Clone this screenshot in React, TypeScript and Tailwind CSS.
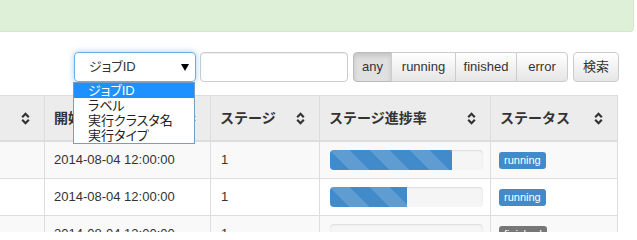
const font = "font-['Liberation_Sans','Noto_Sans_CJK_JP',sans-serif]";

type Job = {
  startedAt: string;
  stage: number;
  progress: number;
  status: "running" | "finished";
};

const jobs: Job[] = [
  { startedAt: "2014-08-04 12:00:00", stage: 1, progress: 80, status: "running" },
  { startedAt: "2014-08-04 12:00:00", stage: 1, progress: 50, status: "running" },
  { startedAt: "2014-08-04 12:00:00", stage: 1, progress: 0, status: "finished" },
];

const options = ["ジョブID", "ラベル", "実行クラスタ名", "実行タイプ"];

function SortIcon() {
  return (
    <svg width="9" height="13" viewBox="0 0 9 13" className="shrink-0">
      <path d="M1.2 5.2 L4.5 1.8 L7.8 5.2" fill="none" stroke="#333" strokeWidth="2.2" />
      <path d="M1.2 7.8 L4.5 11.2 L7.8 7.8" fill="none" stroke="#333" strokeWidth="2.2" />
    </svg>
  );
}

function HeaderCell({ label, className }: { label?: string; className: string }) {
  return (
    <div className={`flex items-center justify-between border-r border-[#dddddd] pl-[9px] pr-[14px] ${className}`}>
      <span className="whitespace-nowrap text-[14px] font-bold text-[#333]">{label}</span>
      <SortIcon />
    </div>
  );
}

function ProgressBar({ value }: { value: number }) {
  return (
    <div className="h-[20px] w-[153px] overflow-hidden rounded-[4px] bg-[#f5f5f5] shadow-[inset_0_1px_2px_rgba(0,0,0,0.1)]">
      <div
        className="h-full bg-[#428bca] bg-[linear-gradient(45deg,rgba(255,255,255,0.15)_25%,transparent_25%,transparent_50%,rgba(255,255,255,0.15)_50%,rgba(255,255,255,0.15)_75%,transparent_75%,transparent)] bg-[length:40px_40px]"
        style={{ width: `${value}%` }}
      />
    </div>
  );
}

function StatusLabel({ status }: { status: Job["status"] }) {
  const color = status === "running" ? "bg-[#428bca]" : "bg-[#777777]";
  return (
    <span className={`inline-block rounded-[3px] px-[5px] pt-[1px] pb-[2px] text-[11px] leading-[14px] text-white ${color}`}>
      {status}
    </span>
  );
}

export default function App() {
  return (
    <div className={`h-[232px] w-[637px] overflow-hidden bg-white text-[#333] ${font}`}>
      <div className="mr-[3px] h-[32px] rounded-br-[4px] border-r border-b border-[#d6e9c6] bg-[#dff0d8]" />

      <div className="mt-[20px] flex h-[30px] pl-[74px]">
        <div className="relative">
          <div className="flex h-[30px] w-[122px] items-center justify-between rounded-[4px] border border-[#66afe9] pl-[14px] pr-[6px] shadow-[0_0_6px_rgba(102,175,233,0.6)]">
            <span className="text-[13px] [font-feature-settings:'palt']">ジョブID</span>
            <svg width="8" height="7" viewBox="0 0 8 7">
              <path d="M0 0 H8 L4 7 Z" fill="#000" />
            </svg>
          </div>
          <ul className="absolute top-[30px] left-[-1px] z-10 w-[122px] border border-[#7a9cbf] bg-white py-0 text-[13px] leading-[15px] [font-feature-settings:'palt']">
            {options.map((option, i) => (
              <li
                key={option}
                className={`h-[15px] pl-[14px] ${i === 0 ? "bg-[#1e90ff] text-white" : "text-[#222]"}`}
              >
                {option}
              </li>
            ))}
          </ul>
        </div>

        <input
          className="ml-[4px] h-[30px] w-[148px] rounded-[4px] border border-[#cccccc] px-2 text-[13px] shadow-[inset_0_1px_1px_rgba(0,0,0,0.075)] outline-none"
          readOnly
        />

        <div className="ml-[5px] flex h-[30px] text-[13px]">
          <button className="w-[39px] rounded-l-[4px] border border-[#bbbbbb] bg-[#e0e0e0] shadow-[inset_0_3px_5px_rgba(0,0,0,0.125)]">
            any
          </button>
          <button className="-ml-px w-[65px] border border-[#cccccc] bg-[linear-gradient(#ffffff,#e6e6e6)]">
            running
          </button>
          <button className="-ml-px w-[62px] border border-[#cccccc] bg-[linear-gradient(#ffffff,#e6e6e6)]">
            finished
          </button>
          <button className="-ml-px w-[52px] rounded-r-[4px] border border-[#cccccc] bg-[linear-gradient(#ffffff,#e6e6e6)]">
            error
          </button>
        </div>

        <button className="ml-[5px] h-[30px] w-[46px] rounded-[4px] border border-[#cccccc] bg-[linear-gradient(#ffffff,#e6e6e6)] text-[13px]">
          検索
        </button>
      </div>

      <div className="mt-[13px] w-[618px]">
        <div className="flex h-[47px] border-t border-b-2 border-[#dddddd] bg-[#ececec]">
          <HeaderCell className="w-[45px] justify-end" />
          <HeaderCell label="開始日時" className="w-[166px]" />
          <HeaderCell label="ステージ" className="w-[109px]" />
          <HeaderCell label="ステージ進捗率" className="w-[171px]" />
          <HeaderCell label="ステータス" className="w-[127px]" />
        </div>

        {jobs.map((job, i) => (
          <div
            key={i}
            className={`flex h-[37px] border-b border-[#dddddd] text-[13px] ${i % 2 === 0 ? "bg-[#f9f9f9]" : "bg-white"}`}
          >
            <div className="w-[45px] border-r border-[#dddddd]" />
            <div className="flex w-[166px] items-center border-r border-[#dddddd] pl-[9px]">
              {job.startedAt}
            </div>
            <div className="flex w-[109px] items-center border-r border-[#dddddd] pl-[10px]">
              {job.stage}
            </div>
            <div className="flex w-[171px] items-center border-r border-[#dddddd] pl-[10px]">
              <ProgressBar value={job.progress} />
            </div>
            <div className="flex w-[127px] items-center border-r border-[#dddddd] pl-[8px]">
              <StatusLabel status={job.status} />
            </div>
          </div>
        ))}
      </div>
    </div>
  );
}
